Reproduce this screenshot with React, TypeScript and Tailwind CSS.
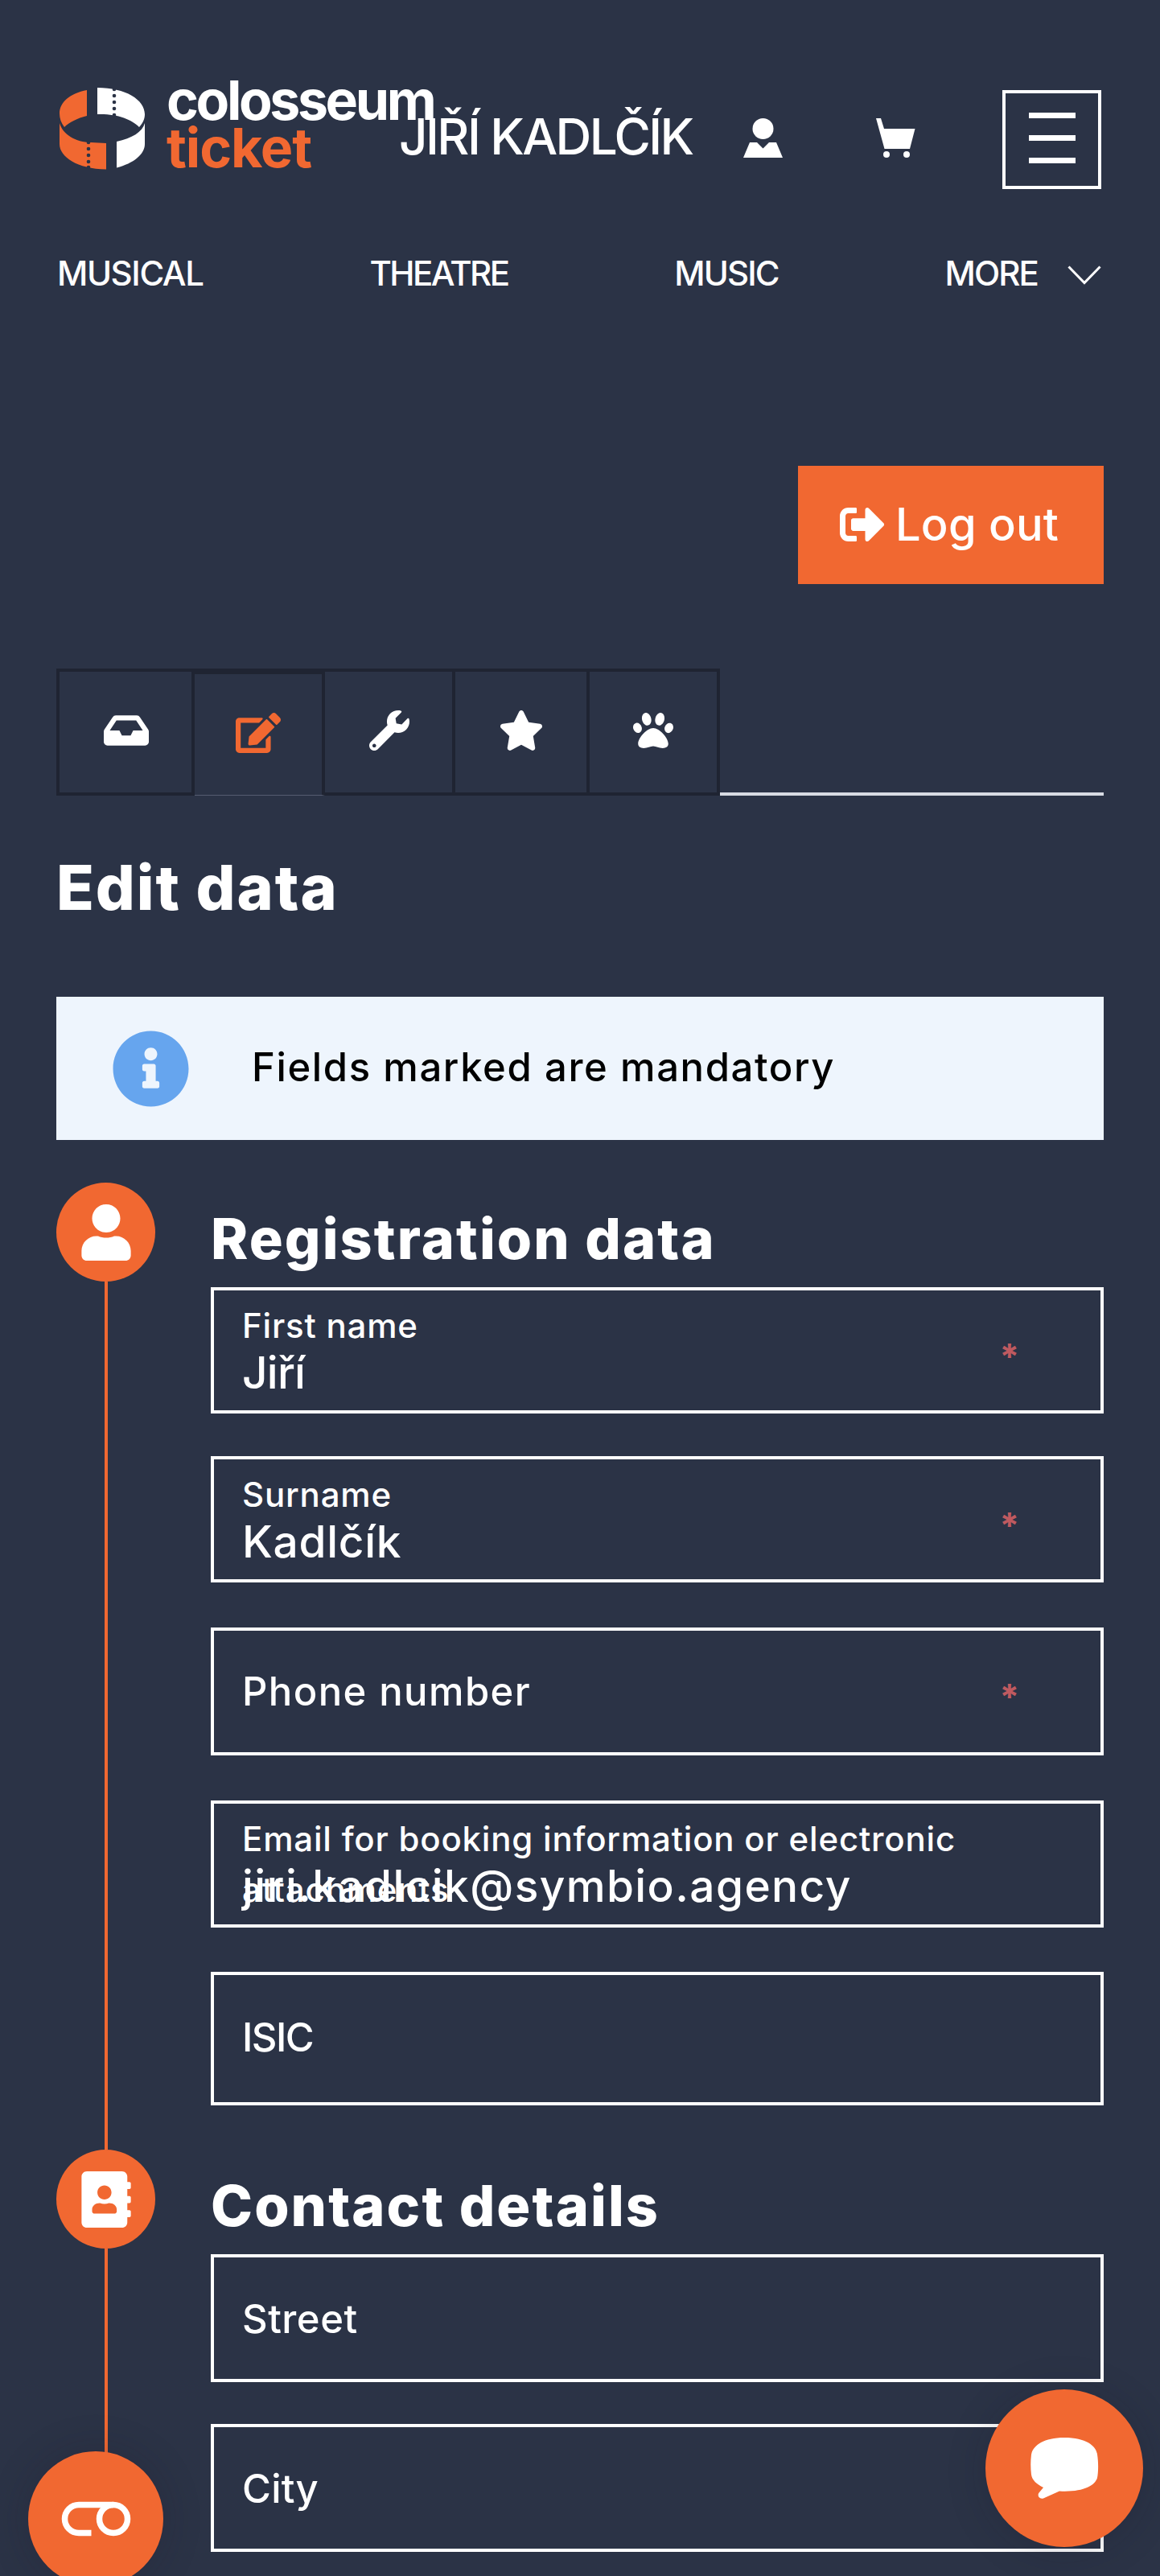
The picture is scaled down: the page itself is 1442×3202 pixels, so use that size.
import type { ReactNode } from "react";
import {
  FaAddressBook,
  FaEdit,
  FaInbox,
  FaInfoCircle,
  FaPaw,
  FaSignOutAlt,
  FaStar,
  FaUser,
  FaWrench,
} from "react-icons/fa";

interface FieldProps {
  label: string;
  value?: string;
  required?: boolean;
  className?: string;
}

const tabs = [
  { id: "orders", icon: <FaInbox className="ml-[2px] h-[50px] w-[56px]" />, className: "w-[172px] border-l-4" },
  { id: "edit", icon: <FaEdit className="h-[50px] w-[56px]" />, className: "w-[162px]", active: true },
  { id: "settings", icon: <FaWrench className="ml-[2px] h-[50px] w-[50px]" />, className: "w-[162px]" },
  { id: "favourites", icon: <FaStar className="h-[50px] w-[56px]" />, className: "w-[167px]" },
  { id: "pets", icon: <FaPaw className="h-[50px] w-[50px]" />, className: "w-[162px]" },
];

const Logo = () => (
  <a href="#" className="flex w-[422px] shrink-0 items-start whitespace-nowrap">
    <svg viewBox="0 0 106 102" className="mt-[14px] h-[102px] w-[106px] shrink-0">
      <path d="M34 3V35C22 38 12 43 6 49C2 44 0 38 0 32C0 18 13 7 34 3Z" fill="#f16831" />
      <path d="M0 44C4 58 20 68 39 68L58 69V101.500C22 101 0 86 0 70Z" fill="#f16831" />
      <path d="M47 0V33C70 32 90 39 99 49C104 44 106 38 106 33C106 15 82 0 47 0Z" fill="#fff" />
      <path d="M106 44V70C106 83 92 94 71 99.500V67C90 63 103 55 106 44Z" fill="#fff" />
      <g fill="#2b3346">
        {[2, 10, 18, 26, 34].map(y => (
          <circle key={y} cx="68" cy={y} r="2.300" />
        ))}
        {[68, 76, 84, 92, 99].map(y => (
          <circle key={y} cx="36" cy={y} r="2.300" />
        ))}
      </g>
    </svg>
    <span className="ml-[27px] flex flex-col text-[68px] leading-[59px] font-bold">
      <span className="tracking-[-3.4px]">colosseum</span>
      <span className="tracking-[-1.1px] text-[#f16831]">ticket</span>
    </span>
  </a>
);

const Header = () => (
  <header className="pt-[95px]">
    <div className="flex items-start pl-[74px]">
      <Logo />
      <span className="mt-[44px] w-[428px] text-[62px] leading-none tracking-[-2.6px] whitespace-nowrap">
        JIŘÍ KADLČÍK
      </span>
      <svg viewBox="0 0 49 49" className="mt-[52px] h-[49px] w-[49px]" fill="#fff">
        <circle cx="24.500" cy="13" r="13" />
        <path d="M8 30H17L24.500 37.500L32 30H41L49 49H0Z" />
      </svg>
      <svg viewBox="0 0 49 49" className="mt-[52px] ml-[116px] h-[49px] w-[49px]" fill="#fff">
        <path d="M0 0H6L10 13H48.500L42 38H10.500Z" />
        <circle cx="13" cy="45" r="4" />
        <circle cx="38" cy="45" r="4" />
      </svg>
      <button
        className="mt-[17px] ml-[108px] flex h-[123px] w-[123px] flex-col items-center gap-[21px] border-4 border-white pt-[24px]"
        aria-label="Menu">
        <span className="h-[7px] w-[58px] bg-white" />
        <span className="h-[7px] w-[58px] bg-white" />
        <span className="h-[7px] w-[58px] bg-white" />
      </button>
    </div>
    <nav className="mt-[84px] flex justify-between pr-[73px] pl-[71px] text-[42px] leading-none tracking-[-1.9px]">
      <a href="#" className="tracking-[-1.4px]">
        MUSICAL
      </a>
      <a href="#" className="tracking-[-2.6px]">
        THEATRE
      </a>
      <a href="#">MUSIC</a>
      <a href="#" className="flex items-center gap-[37px]">
        MORE
        <svg viewBox="0 0 42 24" className="mt-[4px] h-[24px] w-[42px]" fill="none" stroke="#fff" strokeWidth="3">
          <path d="M1.500 1.500L21 21.500L40.500 1.500" />
        </svg>
      </a>
    </nav>
  </header>
);

const Tabs = () => (
  <div className="mt-[105px] flex h-[158px] items-stretch">
    {tabs.map(tab => (
      <button
        key={tab.id}
        aria-label={tab.id}
        className={`flex items-center justify-center border-r-4 border-[#1f2432] ${tab.className} ${
          tab.active
            ? "border-t-[7px] border-b border-b-[#555c70] pb-[5px] text-[#f16831]"
            : "border-t-4 border-b-4 pb-[5px]"
        }`}>
        {tab.icon}
      </button>
    ))}
    <div className="flex-1 border-b-4 border-[#d8dbe3]" />
  </div>
);

const Field = ({ label, value, required, className = "h-[157px]" }: FieldProps) => (
  <div className={`relative flex items-center border-4 border-white pl-[35px] ${className}`}>
    {value ? (
      <>
        {/* floated label, may run under the value when it wraps */}
        <label className="absolute top-[12px] left-[35px] w-[950px] text-[42px] leading-[63px] tracking-[0.8px]">
          {label}
        </label>
        <span className="mt-[55px] text-[55px] leading-none">{value}</span>
      </>
    ) : (
      <label className="text-[49px] leading-none">{label}</label>
    )}
    {required && (
      <span className="absolute top-[60px] right-[101px] text-[44px] leading-none font-bold tracking-normal text-[#bf5a60]">
        *
      </span>
    )}
  </div>
);

const Section = ({ icon, title, children }: { icon: ReactNode; title: string; children: ReactNode }) => (
  <section className="flex">
    <div className="flex w-[123px] shrink-0 flex-col items-center">
      <div className="flex h-[123px] w-[123px] shrink-0 items-center justify-center rounded-full bg-[#f16831]">
        {icon}
      </div>
      <div className="w-[4px] flex-1 bg-[#f16831]" />
    </div>
    <div className="ml-[69px] flex-1">
      <h2 className="h-[130px] pt-[35px] text-[70px] leading-none font-extrabold tracking-[2.1px]">{title}</h2>
      {children}
    </div>
  </section>
);

export default function App() {
  return (
    <div className="relative h-[3202px] w-[1442px] overflow-hidden bg-[#2b3346] font-['Inter',sans-serif] font-medium text-white">
      <Header />
      <main className="px-[70px] pt-[218px] tracking-[1.4px]">
        <div className="flex justify-end">
          <button className="flex h-[147px] w-[380px] items-center bg-[#f16831] pb-[2px] pl-[52px] text-[56px] tracking-[0.2px] whitespace-nowrap">
            <FaSignOutAlt className="h-[56px] w-[56px]" />
            <span className="ml-[13px]">Log out</span>
          </button>
        </div>
        <Tabs />
        <h1 className="mt-[76px] text-[77px] leading-none font-extrabold tracking-[1.9px]">Edit data</h1>
        <div className="mt-[97px] flex h-[178px] items-center bg-[#eef5fd] pl-[69px] text-black">
          <FaInfoCircle className="h-[97px] w-[97px] text-[#66a5ee]" />
          <span className="mb-[3px] ml-[77px] text-[49px] leading-none tracking-[1.6px]">
            Fields marked are mandatory
          </span>
        </div>
        <div className="mt-[53px]">
          <Section icon={<FaUser className="h-[70px] w-[62px]" />} title="Registration data">
            <div className="flex flex-col pb-[55px]">
              <Field label="First name" value="Jiří" required className="h-[157px] tracking-[-0.8px]" />
              <Field label="Surname" value="Kadlčík" required className="mt-[53px] h-[157px] tracking-[0.7px]" />
              <Field label="Phone number" required className="mt-[56px] h-[159px]" />
              <Field
                label="Email for booking information or electronic attachments"
                value="jiri.kadlcik@symbio.agency"
                className="mt-[56px] h-[158px]"
              />
              <Field label="ISIC" className="mt-[55px] h-[166px] pb-[4px] tracking-[-1.5px]" />
            </div>
          </Section>
          <Section icon={<FaAddressBook className="h-[70px] w-[62px]" />} title="Contact details">
            <div className="flex flex-col pb-[55px]">
              <Field label="Street" className="h-[159px] pt-[1px] tracking-[0.5px]" />
              <Field label="City" className="mt-[52px] h-[159px] pt-[2px] tracking-[0.2px]" />
            </div>
          </Section>
        </div>
      </main>

      <button
        className="absolute top-[3047px] left-[35px] h-[168px] w-[168px] rounded-full bg-[#f16831] shadow-[0_0_50px_rgba(32,20,40,0.2)]"
        aria-label="Cookie settings">
        <svg viewBox="0 0 168 168" fill="none" stroke="#fff" strokeWidth="7.500">
          <path d="M78.500 101.500H63A17.400 17.400 0 0 1 63 66.500H106" />
          <circle cx="106" cy="84" r="17.500" />
        </svg>
      </button>
      <button
        className="absolute top-[2970px] left-[1225px] h-[196px] w-[196px] rounded-full bg-[#f16831] shadow-[0_4px_50px_rgba(20,20,40,0.2)]"
        aria-label="Chat">
        <svg viewBox="0 0 196 196" fill="#fff">
          <path d="M98 60C126 60 138 71 139 81C140.500 90 140.500 102 139 110C136 120 121 128 92 126.500L72 135.500C66 137 64 131 67 128L72 122C64 118 58 113 57 106C56 98 56 89 57 81C59 70 72 60 98 60Z" />
        </svg>
      </button>
    </div>
  );
}
